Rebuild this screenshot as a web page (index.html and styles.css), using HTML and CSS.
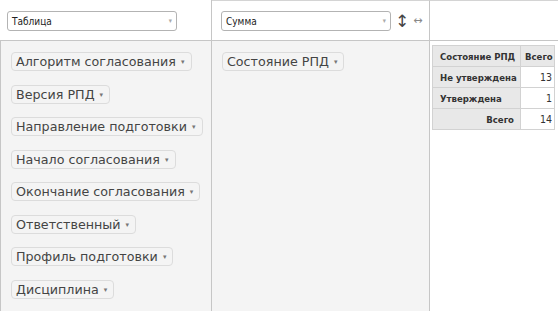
FILE: index.html
```html
<!DOCTYPE html>
<html lang="ru">
<head>
<meta charset="utf-8">
<title>Pivot</title>
<link rel="stylesheet" href="styles.css">
</head>
<body>
<div class="ui">
  <div class="cell renderer">
    <div class="select wide"><span class="sel-text">Таблица</span><span class="sel-arrow">▾</span></div>
  </div>
  <div class="cell vals">
    <div class="select"><span class="sel-text">Сумма</span><span class="sel-arrow">▾</span></div>
    <span class="order row-order">↕</span>
    <span class="order col-order">↔</span>
  </div>
  <div class="cell corner"></div>

  <div class="cell axis unused">
    <span class="attr">Алгоритм согласования <span class="tri">▾</span></span>
    <span class="attr">Версия РПД <span class="tri">▾</span></span>
    <span class="attr">Направление подготовки <span class="tri">▾</span></span>
    <span class="attr">Начало согласования <span class="tri">▾</span></span>
    <span class="attr">Окончание согласования <span class="tri">▾</span></span>
    <span class="attr">Ответственный <span class="tri">▾</span></span>
    <span class="attr">Профиль подготовки <span class="tri">▾</span></span>
    <span class="attr">Дисциплина <span class="tri">▾</span></span>
  </div>
  <div class="cell axis rows">
    <span class="attr">Состояние РПД <span class="tri">▾</span></span>
  </div>
  <div class="cell output">
    <table class="pvt">
      <colgroup><col class="c1"><col class="c2"></colgroup>
      <thead>
        <tr><th class="lbl">Состояние РПД</th><th class="lbl num-head">Всего</th></tr>
      </thead>
      <tbody>
        <tr><th class="lbl">Не утверждена</th><td class="val">13</td></tr>
        <tr><th class="lbl">Утверждена</th><td class="val">1</td></tr>
        <tr><th class="lbl total">Всего</th><td class="val">14</td></tr>
      </tbody>
    </table>
  </div>
</div>
</body>
</html>
```
FILE: styles.css
```css
html, body {
  margin: 0;
  padding: 0;
  background: #ffffff;
}
body {
  font-family: "DejaVu Sans", Verdana, sans-serif;
  color: #333;
}
.ui {
  display: grid;
  grid-template-columns: 212px 218px 128px;
  grid-template-rows: 41px 270px;
  width: 558px;
  height: 311px;
  overflow: hidden;
}
.cell {
  box-sizing: border-box;
  border-right: 1px solid #c6c6c6;
  border-bottom: 1px solid #c6c6c6;
}
.renderer {
  padding: 11px 0 0 7px;
}
.vals {
  display: flex;
  align-items: flex-start;
  padding: 10px 0 0 9px;
  border-top: 1px solid #d4d4d4;
}
.corner {
  border-right: none;
  border-top: 1px solid #d4d4d4;
}
.select {
  box-sizing: border-box;
  width: 170px;
  height: 20px;
  border: 1px solid #b3b3b3;
  border-radius: 3px;
  background: #fff;
  display: flex;
  align-items: center;
  justify-content: space-between;
  padding: 0 4px 0 4px;
  font-family: "DejaVu Sans Condensed", "DejaVu Sans", sans-serif;
  font-size: 10px;
  color: #222;
}
.sel-arrow {
  font-size: 7px;
  color: #aaa;
}
.order {
  line-height: 20px;
  color: #555;
}
.row-order {
  margin-left: 4px;
  font-size: 17px;
  font-weight: normal;
  color: #444;
}
.col-order {
  margin-left: 4px;
  font-size: 11px;
  color: #888;
}
.axis {
  background: #f4f4f4;
  display: flex;
  flex-direction: column;
  align-items: flex-start;
  gap: 13.5px;
  padding: 11px 0 0 10px;
  border-bottom: none;
}
.unused {
  border-left: 1px solid #c6c6c6;
}
.attr {
  box-sizing: border-box;
  height: 19px;
  line-height: 17px;
  border: 1px solid #dcdcdc;
  border-radius: 4px;
  background: #f4f4f4;
  padding: 0 6px 0 4px;
  font-size: 12.7px;
  color: #444;
  white-space: nowrap;
}
.tri {
  font-size: 7px;
  color: #777;
  vertical-align: 2px;
  margin-left: 1px;
}
.output {
  border-right: none;
  border-bottom: none;
  padding: 4px 0 0 2px;
}
.pvt {
  border-collapse: collapse;
  table-layout: fixed;
  width: 122px;
  font-family: "DejaVu Sans Condensed", "DejaVu Sans", sans-serif;
  font-size: 9.5px;
}
.c1 { width: 88px; }
.c2 { width: 34px; }
.pvt th, .pvt td {
  border: 1px solid #d2d2d2;
  height: 21px;
  box-sizing: border-box;
  padding: 0 2px 0 7px;
  white-space: nowrap;
  overflow: hidden;
}
.pvt th.lbl {
  background: #e8e8e8;
  font-weight: bold;
  text-align: left;
  color: #333;
}
.pvt th.num-head {
  padding-left: 4px;
}
.pvt th.total {
  text-align: right;
  padding-right: 6px;
}
.pvt td.val {
  background: #fff;
  text-align: right;
  font-size: 10.5px;
  color: #333;
}
```
